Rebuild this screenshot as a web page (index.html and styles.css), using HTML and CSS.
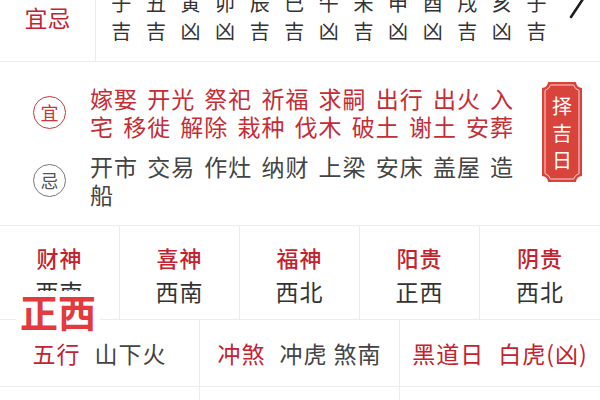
FILE: index.html
```html
<!DOCTYPE html>
<html lang="zh-CN">
<head>
<meta charset="utf-8">
<title>黄历</title>
<link rel="stylesheet" href="styles.css">
</head>
<body>
<div class="page">
  <div class="scroll">
    <section class="hours-row">
      <div class="hr-label">宜忌</div>
      <div class="hours">
        <span>子</span><span>丑</span><span>寅</span><span>卯</span><span>辰</span><span>巳</span><span>午</span><span>未</span><span>申</span><span>酉</span><span>戌</span><span>亥</span><span>子</span>
        <span>吉</span><span>吉</span><span>凶</span><span>凶</span><span>吉</span><span>吉</span><span>凶</span><span>吉</span><span>凶</span><span>凶</span><span>吉</span><span>凶</span><span>吉</span>
      </div>
      <div class="chev">
        <svg width="18" height="42" viewBox="0 0 18 42"><polyline points="3,3 15,21 3,39" fill="none" stroke="#1e1e1e" stroke-width="2.6" stroke-linecap="round" stroke-linejoin="round"/></svg>
      </div>
    </section>

    <section class="yiji">
      <div class="yiji-main">
        <div class="yj-block yi">
          <div class="mark-cell"><span class="mark">宜</span></div>
          <p class="yj-text">嫁娶 开光 祭祀 祈福 求嗣 出行 出火 入宅 移徙 解除 栽种 伐木 破土 谢土 安葬</p>
        </div>
        <div class="yj-block ji">
          <div class="mark-cell"><span class="mark">忌</span></div>
          <p class="yj-text">开市 交易 作灶 纳财 上梁 安床 盖屋 造船</p>
        </div>
      </div>
      <div class="badge">
        <svg class="badge-bg" width="40" height="100" viewBox="0 0 40 100">
          <path d="M6,0 H34 A6,6 0 0 0 40,6 V94 A6,6 0 0 0 34,100 H6 A6,6 0 0 0 0,94 V6 A6,6 0 0 0 6,0 Z" fill="#d8433b"/>
          <path d="M8.5,3 H31.5 A9,9 0 0 0 37,8.5 V91.5 A9,9 0 0 0 31.5,97 H8.5 A9,9 0 0 0 3,91.5 V8.5 A9,9 0 0 0 8.5,3 Z" fill="none" stroke="#f6d6d2" stroke-width="1"/>
        </svg>
        <span>择</span><span>吉</span><span>日</span>
      </div>
    </section>

    <section class="gods">
      <div class="god"><span class="g-label">财神</span><span class="g-val">西南</span></div>
      <div class="god"><span class="g-label">喜神</span><span class="g-val">西南</span></div>
      <div class="god"><span class="g-label">福神</span><span class="g-val">西北</span></div>
      <div class="god"><span class="g-label">阳贵</span><span class="g-val">正西</span></div>
      <div class="god"><span class="g-label">阴贵</span><span class="g-val">西北</span></div>
    </section>

    <section class="misc">
      <div class="m-cell"><span class="m-label">五行</span><span class="m-val">山下火</span></div>
      <div class="m-cell"><span class="m-label">冲煞</span><span class="m-val">冲虎 煞南</span></div>
      <div class="m-cell"><span class="m-label">黑道日</span><span class="m-val red">白虎(凶)</span></div>
    </section>

    <section class="misc empty">
      <div class="m-cell"></div>
      <div class="m-cell"></div>
      <div class="m-cell"></div>
    </section>
  </div>
  <div class="stamp">正西</div>
</div>
</body>
</html>
```

FILE: styles.css
```css
html, body {
  margin: 0;
  padding: 0;
  background: #ffffff;
}
body {
  width: 600px;
  height: 400px;
  overflow: hidden;
  font-family: "Noto Sans CJK SC", "Noto Sans", sans-serif;
  color: #333333;
}
.page {
  position: relative;
  width: 600px;
  height: 400px;
  overflow: hidden;
}
.scroll {
  margin-top: -28px;
}

/* top hours row */
.hours-row {
  display: flex;
  align-items: center;
  height: 89px;
  border-bottom: 1px solid #ececec;
}
.hr-label {
  width: 95px;
  height: 100%;
  border-right: 1px solid #ececec;
  display: flex;
  align-items: center;
  justify-content: center;
  color: #c3222f;
  font-size: 23px;
  line-height: 30px;
}
.hours {
  margin-left: 8px;
  display: grid;
  grid-template-columns: repeat(13, 34.6px);
  font-size: 20px;
  line-height: 28px;
  color: #333333;
  text-align: center;
}
.chev {
  align-self: flex-start;
  margin-top: 6px;
  margin-left: 14px;
  display: flex;
}

/* yi / ji */
.yiji {
  display: flex;
  align-items: flex-start;
  padding: 20px 0 17px 0;
  border-bottom: 1px solid #ececec;
}
.yiji-main {
  padding-top: 2px;
  display: flex;
  flex-direction: column;
  gap: 12px;
}
.yj-block {
  display: flex;
  align-items: center;
}
.mark-cell {
  width: 90px;
  display: flex;
}
.mark {
  margin-left: 33px;
  width: 31px;
  height: 31px;
  border-radius: 50%;
  display: flex;
  align-items: center;
  justify-content: center;
  font-size: 18px;
  line-height: 1;
}
.yi .mark {
  border: 1.5px solid #c9353a;
  color: #c9353a;
}
.ji .mark {
  border: 1.5px solid #777777;
  color: #555555;
}
.yj-text {
  margin: 0;
  width: 435px;
  font-size: 23px;
  line-height: 28px;
  letter-spacing: 1px;
  word-spacing: 3px;
}
.yi .yj-text {
  color: #c42c36;
}
.ji .yj-text {
  color: #444444;
}
.badge {
  position: relative;
  margin-left: 17px;
  width: 40px;
  height: 100px;
  display: flex;
  flex-direction: column;
  align-items: center;
  justify-content: center;
  color: #ffffff;
  font-size: 20px;
  line-height: 27px;
}
.badge span {
  position: relative;
}
.badge-bg {
  position: absolute;
  left: 0;
  top: 0;
}

/* gods grid */
.gods {
  display: grid;
  grid-template-columns: repeat(5, 1fr);
  height: 93px;
  border-bottom: 1px solid #ececec;
}
.god {
  display: flex;
  flex-direction: column;
  align-items: center;
  padding-top: 16px;
  border-right: 1px solid #ececec;
}
.god:last-child {
  border-right: none;
}
.g-label {
  color: #c3222f;
  font-size: 22px;
  line-height: 30px;
  font-weight: 500;
  letter-spacing: 1px;
}
.g-val {
  margin-top: 4px;
  color: #333333;
  font-size: 23px;
  line-height: 30px;
  letter-spacing: 1px;
}

/* misc rows */
.misc {
  display: grid;
  grid-template-columns: repeat(3, 1fr);
  height: 66px;
  border-bottom: 1px solid #ececec;
}
.m-cell {
  display: flex;
  align-items: center;
  justify-content: center;
  gap: 14px;
  border-right: 1px solid #ececec;
  font-size: 23px;
  letter-spacing: 1px;
  line-height: 30px;
}
.m-cell:last-child {
  border-right: none;
}
.m-label {
  color: #c3222f;
}
.m-val {
  color: #444444;
}
.m-val.red {
  color: #c3222f;
}
.misc.empty {
  height: 60px;
}

/* overlay stamp */
.stamp {
  position: absolute;
  left: 16px;
  top: 291px;
  padding: 0 4px;
  background: #ffffff;
  color: #e23a3d;
  font-size: 38px;
  font-weight: 700;
  line-height: 40px;
}
```
